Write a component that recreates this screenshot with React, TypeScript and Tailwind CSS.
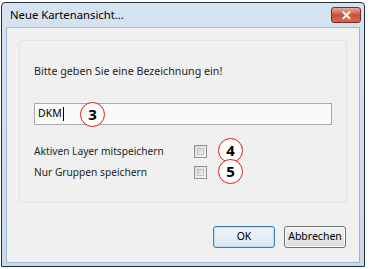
import React from "react";

const font = { fontFamily: '"Noto Sans", "Open Sans", sans-serif' };

function Marker({ n }: { n: string }) {
  return (
    <span className="absolute flex h-[25px] w-[25px] items-center justify-center rounded-full border-[1.5px] border-[#e0191b] bg-white text-[15px] font-bold text-black">
      {n}
    </span>
  );
}

function Checkbox() {
  return (
    <span className="block h-[13px] w-[13px] border border-[#8f8f8f] bg-gradient-to-br from-[#dcdcdc] to-[#f7f7f7] p-[2px]">
      <span className="block h-full w-full border border-[#c4c4c4] bg-gradient-to-br from-[#cfcfcf] to-[#f2f2f2]" />
    </span>
  );
}

export default function App() {
  return (
    <div className="h-[269px] w-[370px] bg-white pl-[1px] pt-[2px]" style={font}>
      <div className="flex h-[265px] w-[364px] flex-col rounded-t-[4px] border border-[#22303a] bg-gradient-to-b from-[#d6e3f1] to-[#cbdaeb]">
        {/* Title bar */}
        <div className="flex h-[24px] items-center justify-between pl-[8px] pr-[3px]">
          <span className="text-[11.3px] text-black">Neue Kartenansicht...</span>
          <button className="flex h-[16px] w-[30px] items-center justify-center rounded-[3px] border border-[#7a2a22] bg-gradient-to-b from-[#e9a99a] via-[#c9513c] to-[#d36b4d] text-[13px] font-bold leading-none text-white">
            ✕
          </button>
        </div>

        {/* Client area */}
        <div className="mx-[4px] mb-[3px] flex flex-1 flex-col border border-[#9fb7cf] bg-[#f0f0f0]">
          <div className="relative mx-[12px] mt-[12px] h-[163px] rounded-[3px] border border-[#dde3e8] px-[14px] pt-[22px]">
            <div className="text-[10.7px] leading-[16px] text-[#1e1e1e]">Bitte geben Sie eine Bezeichnung ein!</div>

            <div className="relative mt-[24px] flex h-[22px] w-[298px] items-center border border-[#aaaaaa] bg-[#fafafa] pl-[3px] text-[10.5px] text-black">
              DKM<span className="ml-[1px] h-[14px] w-[1px] bg-black" />
              <span className="absolute left-[45px] top-[-2px]">
                <Marker n="3" />
              </span>
            </div>

            <div className="mt-[18px] flex h-[16px] items-center">
              <span className="w-[160px] text-[10.2px] leading-[16px] text-[#1e1e1e]">Aktiven Layer mitspeichern</span>
              <Checkbox />
              <span className="relative ml-[11px] h-[1px] w-[1px]">
                <span className="absolute left-0 top-[-13px]">
                  <Marker n="4" />
                </span>
              </span>
            </div>
            <div className="mt-[5px] flex h-[16px] items-center">
              <span className="w-[160px] text-[10.2px] leading-[16px] text-[#1e1e1e]">Nur Gruppen speichern</span>
              <Checkbox />
              <span className="relative ml-[11px] h-[1px] w-[1px]">
                <span className="absolute left-0 top-[-13px]">
                  <Marker n="5" />
                </span>
              </span>
            </div>
          </div>

          <div className="mt-auto mb-[14px] flex justify-end gap-[9px] pr-[13px]">
            <button className="h-[22px] w-[62px] rounded-[3px] border border-[#3c7fb1] bg-gradient-to-b from-[#f2f2f2] via-[#e6eef4] to-[#d9e6f0] text-[10.5px] text-black shadow-[inset_0_0_0_1px_#b9def4]">
              OK
            </button>
            <button className="h-[22px] w-[62px] rounded-[3px] border border-[#707070] bg-gradient-to-b from-[#f2f2f2] to-[#dcdcdc] text-[10.5px] text-black shadow-[inset_0_0_0_1px_#fcfcfc]">
              Abbrechen
            </button>
          </div>
        </div>
      </div>
    </div>
  );
}
